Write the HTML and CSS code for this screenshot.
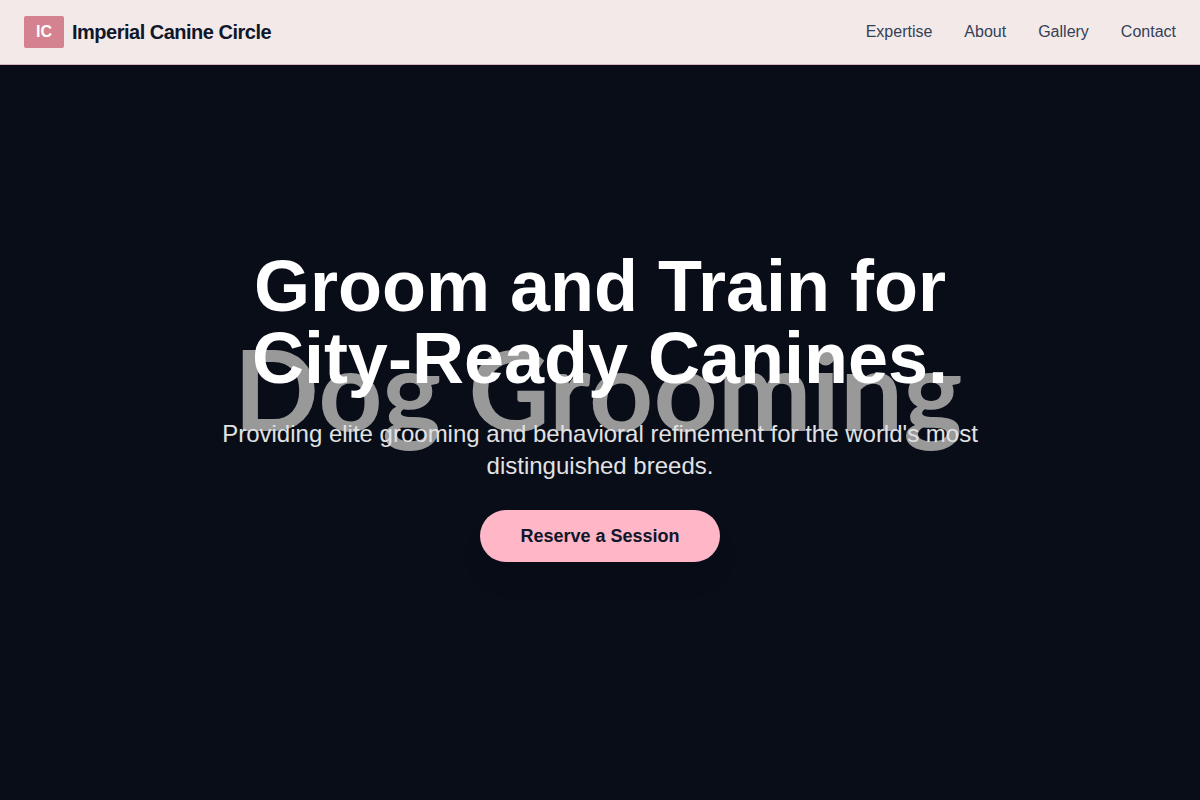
FILE: index.html
```html
<!DOCTYPE html>
<html lang="en">
<head>
    <meta charset="UTF-8">
    <meta name="viewport" content="width=device-width, initial-scale=1.0">
    <title>Imperial Canine Circle</title>
    <link rel="stylesheet" href="styles.css">
</head>
<body>
    <header class="site-header">
        <a class="brand" href="#home">
            <span class="brand-badge">IC</span>
            <span class="brand-name">Imperial Canine Circle</span>
        </a>
        <nav class="site-nav">
            <a href="#expertise">Expertise</a>
            <a href="#about">About</a>
            <a href="#gallery">Gallery</a>
            <a href="#contact">Contact</a>
        </nav>
    </header>

    <main>
        <section class="hero" id="home">
            <div class="hero-backdrop" aria-hidden="true">Dog Grooming</div>
            <div class="hero-content">
                <h1>Groom and Train for City-Ready Canines.</h1>
                <p>Providing elite grooming and behavioral refinement for the world's most distinguished breeds.</p>
                <button type="button" class="hero-button">Reserve a Session</button>
            </div>
        </section>
    </main>
</body>
</html>
```

FILE: styles.css
```css
* {
    box-sizing: border-box;
}

body {
    margin: 0;
    background-color: #080d18;
    font-family: "Liberation Sans", Arial, sans-serif;
    font-size: 16px;
    line-height: 24px;
}

a {
    color: inherit;
    text-decoration: none;
}

/* Header stays over the hero */
.site-header {
    position: fixed;
    top: 0;
    left: 0;
    right: 0;
    z-index: 10;
    display: flex;
    justify-content: space-between;
    align-items: center;
    padding: 16px 24px;
    background-color: #f3e9e9;
    border-bottom: 1px solid #d8b4bf;
}

.brand {
    display: flex;
    align-items: center;
    gap: 8px;
}

.brand-badge {
    padding: 4px 12px;
    border-radius: 2px;
    background-color: #d48190;
    color: #fff;
    font-weight: bold;
}

.brand-name {
    color: #0f172a;
    font-size: 20px;
    font-weight: bold;
    line-height: 28px;
    letter-spacing: -0.5px;
}

.site-nav {
    display: flex;
    gap: 32px;
    color: #334155;
}

/* Hero */
.hero {
    position: relative;
    display: flex;
    align-items: center;
    justify-content: center;
    min-height: 100vh;
    padding: 0 24px;
    overflow: hidden;
    text-align: center;
}

/* Large word behind the headline */
.hero-backdrop {
    position: absolute;
    inset: 0;
    display: flex;
    align-items: center;
    justify-content: center;
    padding: 0 4px 24px 0;
    color: #999;
    font-family: Lato, sans-serif;
    font-size: 112px;
    font-weight: bold;
    white-space: nowrap;
}

.hero-content {
    position: relative;
    max-width: 800px;
    padding-top: 12px;
}

.hero h1 {
    margin: 0 0 24px;
    color: #fff;
    font-size: 72px;
    line-height: 72px;
}

.hero p {
    margin: 0 0 28px;
    color: #e2e2e4;
    font-size: 24px;
    line-height: 32px;
}

.hero-button {
    display: block;
    margin: 0 auto;
    padding: 12px 40px;
    border: none;
    border-radius: 26px;
    background-color: #ffb6c6;
    box-shadow: 0 20px 24px -4px rgba(0, 0, 0, 0.1);
    color: #0f172a;
    font-family: inherit;
    font-size: 18px;
    font-weight: bold;
    line-height: 28px;
    cursor: pointer;
}
```
